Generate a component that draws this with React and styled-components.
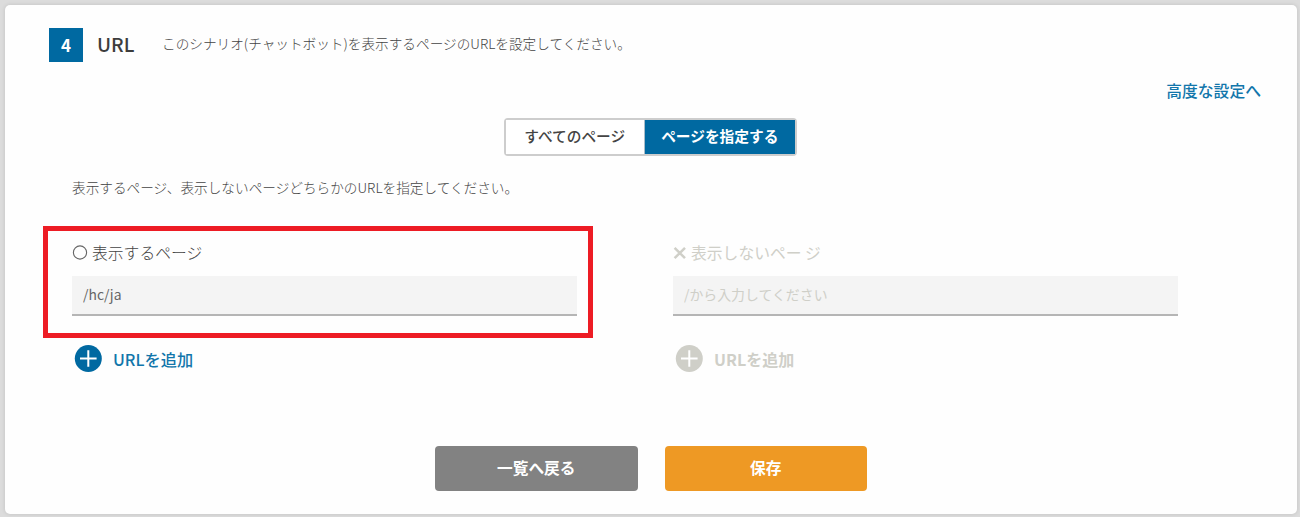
import React from "react";
import styled, { createGlobalStyle } from "styled-components";

const BLUE = "#0069a1";
const MUTED = "#cfcfc8";

const Global = createGlobalStyle`
  * { box-sizing: border-box; }
  body {
    margin: 0;
    background: #dcdcdc;
    color: #444;
    font-family: "Noto Sans CJK JP", "Noto Sans", sans-serif;
  }
  button, input { font-family: inherit; }
`;

const Page = styled.main`
  height: 517px;
  padding: 5px 3px 3px 5px;
  overflow: hidden;
`;

const Card = styled.section`
  display: flex;
  flex-direction: column;
  height: 509px;
  background: #fefefe;
  border-radius: 5px;
  box-shadow: 0 0 4px rgba(0, 0, 0, 0.12);
`;

const Header = styled.header`
  display: flex;
  align-items: center;
  height: 34px;
  margin: 23px 0 0 44px;
`;

const Step = styled.span`
  width: 34px;
  height: 34px;
  background: ${BLUE};
  color: #fff;
  font-size: 17px;
  font-weight: 700;
  line-height: 33px;
  text-align: center;
`;

const Title = styled.h2`
  width: 65px;
  margin: 0 0 0 14px;
  color: #3c3c3c;
  font-size: 19.2px;
  font-weight: 500;
  line-height: 32px;
  padding-bottom: 2px;
`;

const Text = styled.p`
  margin: 0;
  color: #444;
  font-size: 13.65px;
  font-weight: 300;
  line-height: 20px;
`;

const Intro = styled(Text)`
  padding-bottom: 4px;
`;

const Advanced = styled.a`
  align-self: flex-end;
  margin: 17px 36px 0 0;
  color: #1276ab;
  font-size: 15.8px;
  font-weight: 500;
  line-height: 24px;
`;

const Segments = styled.div`
  display: flex;
  align-self: center;
  width: 293px;
  height: 38px;
  margin: 15px 1px 0 0;
  border: 2px solid #cdcdcd;
  border-radius: 4px;
`;

const Segment = styled.button`
  width: ${(p) => (p.$active ? "152px" : "138px")};
  padding: 0 0 3px;
  border: 0;
  border-left: ${(p) => (p.$active ? "1px solid #a9bdca" : "0")};
  background: ${(p) => (p.$active ? BLUE : "#fff")};
  color: ${(p) => (p.$active ? "#fff" : "#444")};
  font-size: 14.7px;
  font-weight: ${(p) => (p.$active ? 700 : 500)};
  white-space: nowrap;
`;

const Guide = styled(Text)`
  margin: 21px 0 1px 67px;
`;

const Columns = styled.div`
  display: flex;
  gap: 51px;
  margin: 28px 0 0 38px;
`;

const Column = styled.div`
  width: 550px;
`;

const Field = styled.div`
  height: 112px;
  padding: 9px 11px 0 24px;
  border: 5px solid ${(p) => (p.$highlight ? "#ed1c24" : "transparent")};
`;

const Label = styled.label`
  display: flex;
  align-items: center;
  height: 24px;
  margin-bottom: 12px;
  color: ${(p) => (p.$muted ? MUTED : "#444")};
  font-size: 15.8px;
  font-weight: ${(p) => (p.$muted ? 400 : 300)};
  white-space: nowrap;
  svg {
    flex: none;
    margin: 2px 4px 0 0;
  }
`;

const Input = styled.input`
  display: block;
  width: 505px;
  height: 40px;
  padding: 0 11px 2px;
  border: 0;
  border-bottom: 2px solid #b5b5b5;
  border-radius: 0;
  background: #f4f4f4;
  color: #666;
  font-size: 13.9px;
  outline: 0;
  &::placeholder {
    color: ${MUTED};
    opacity: 1;
  }
`;

const AddButton = styled.button`
  display: flex;
  align-items: center;
  gap: 11px;
  height: 28px;
  margin: 7px 0 0 31px;
  padding: 0;
  border: 0;
  background: none;
  color: ${(p) => (p.$muted ? MUTED : "#1276ab")};
  font-size: ${(p) => (p.$muted ? "16px" : "16.2px")};
  font-weight: ${(p) => (p.$muted ? 700 : 500)};
  span { padding-bottom: 1px; }
`;

const Actions = styled.div`
  display: flex;
  align-self: center;
  gap: 27px;
  margin: 73px 0 0;
`;

const Action = styled.button`
  width: 202.5px;
  height: 45px;
  padding: 0 0 2px;
  border: 0;
  border-radius: 4px;
  background: ${(p) => (p.$primary ? "#ee9924" : "#828282")};
  color: #fff;
  font-size: 15.7px;
  font-weight: 700;
`;

function CircleMark() {
  return (
    <svg width="16" height="16" viewBox="0 0 16 16">
      <circle cx="8" cy="7.5" r="6.6" fill="none" stroke="#666" strokeWidth="1.1" />
    </svg>
  );
}

function CrossMark() {
  return (
    <svg width="14" height="14" viewBox="0 0 14 14">
      <path d="M1.6 1.8 12 12.2M12 1.8 1.6 12.2" stroke={MUTED} strokeWidth="2.5" />
    </svg>
  );
}

function PlusMark({ color }) {
  return (
    <svg width="28" height="28" viewBox="0 0 28 28">
      <circle cx="14.3" cy="13.5" r="13.5" fill={color} />
      <path d="M14.3 5.3v16.4M6 13.5h16.6" stroke="#fff" strokeWidth="2" />
    </svg>
  );
}

export default function App() {
  return (
    <Page>
      <Global />
      <Card>
        <Header>
          <Step>4</Step>
          <Title>URL</Title>
          <Intro>このシナリオ(チャットボット)を表示するページのURLを設定してください。</Intro>
        </Header>
        <Advanced>高度な設定へ</Advanced>
        <Segments>
          <Segment>すべてのページ</Segment>
          <Segment $active>ページを指定する</Segment>
        </Segments>
        <Guide>表示するページ、表示しないページどちらかのURLを指定してください。</Guide>
        <Columns>
          <Column>
            <Field $highlight>
              <Label htmlFor="show"><CircleMark />表示するページ</Label>
              <Input id="show" defaultValue="/hc/ja" />
            </Field>
            <AddButton><PlusMark color={BLUE} /><span>URLを追加</span></AddButton>
          </Column>
          <Column>
            <Field>
              <Label htmlFor="hide" $muted><CrossMark />表示しないペー ジ</Label>
              <Input id="hide" placeholder="/から入力してください" />
            </Field>
            <AddButton $muted><PlusMark color={MUTED} /><span>URLを追加</span></AddButton>
          </Column>
        </Columns>
        <Actions>
          <Action>一覧へ戻る</Action>
          <Action $primary>保存</Action>
        </Actions>
      </Card>
    </Page>
  );
}
